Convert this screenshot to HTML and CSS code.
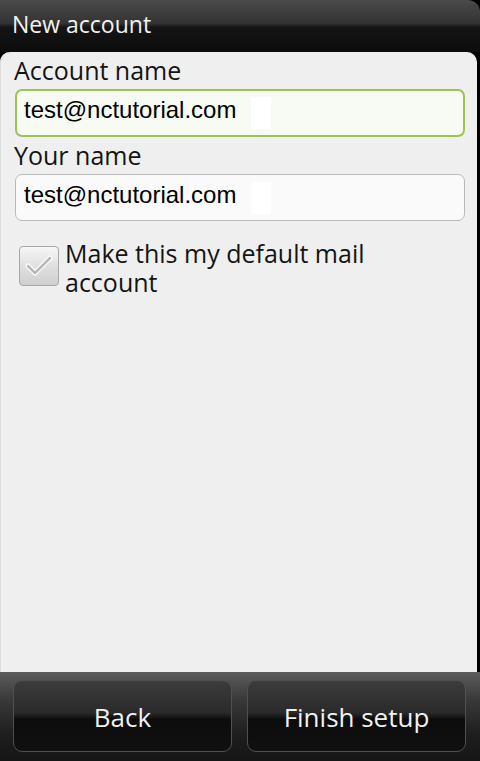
FILE: index.html
```html
<!DOCTYPE html>
<html>
<head>
<meta charset="utf-8">
<link rel="stylesheet" href="styles.css">
</head>
<body>
<div class="screen">
  <div class="titlebar"><span class="title">New account</span></div>
  <div class="panel">
    <div class="label">Account name</div>
    <div class="field field-focus"><span class="value">test@nctutorial.com</span><span class="cursorblock"></span></div>
    <div class="label label2">Your name</div>
    <div class="field"><span class="value">test@nctutorial.com</span><span class="cursorblock"></span></div>
    <div class="checkrow">
      <div class="checkbox">
        <svg width="40" height="40" viewBox="0 0 40 40">
          <path d="M9 20 L16 27 L31 12" fill="none" stroke="#ffffff" stroke-width="5" stroke-linejoin="round" stroke-linecap="round"/>
          <path d="M9 20 L16 27 L31 12" fill="none" stroke="#b8b8b8" stroke-width="2.5" stroke-linejoin="round" stroke-linecap="round"/>
        </svg>
      </div>
      <div class="checktext">Make this my default mail account</div>
    </div>
  </div>
  <div class="bottombar">
    <div class="btn">Back</div>
    <div class="btn">Finish setup</div>
  </div>
</div>
</body>
</html>
```
FILE: styles.css
```css
html, body {
  margin: 0;
  padding: 0;
  background: #000;
}
.screen {
  width: 480px;
  height: 761px;
  display: flex;
  flex-direction: column;
  overflow: hidden;
  background: #000;
}
.titlebar {
  height: 52px;
  flex: none;
  background: linear-gradient(#4a4a4a 0%, #333 45%, #151515 52%, #0c0c0c 100%);
  border-top-right-radius: 12px;
  display: flex;
  align-items: center;
  padding-left: 12px;
  padding-bottom: 4px;
  box-sizing: border-box;
}
.title {
  font-family: "Open Sans", "DejaVu Sans", sans-serif;
  font-size: 23px;
  color: #f2f2f2;
  line-height: 28px;
}
.panel {
  flex: 1;
  background: #efefef;
  border-radius: 10px 10px 0 0;
  margin-right: 3px;
  padding: 4px 14px 0 14px;
  box-shadow: inset 1px 0 0 #dcdcdc;
  display: flex;
  flex-direction: column;
}
.label {
  font-family: "Open Sans", "DejaVu Sans", sans-serif;
  font-size: 25px;
  line-height: 28px;
  color: #141414;
}
.label2 {
  margin-top: 4px;
}
.field {
  margin-top: 5px;
  margin-left: 1px;
  margin-right: -2px;
  height: 47px;
  box-sizing: border-box;
  border: 1px solid #b9b9b9;
  border-radius: 7px;
  background: #fafafa;
  display: flex;
  align-items: center;
  padding-left: 8px;
}
.field-focus {
  height: 48px;
  border: 2px solid #9bc552;
  background: #f8fbf3;
  padding-left: 7px;
}
.value {
  font-family: "Liberation Sans", Arial, sans-serif;
  font-size: 24px;
  color: #000;
  line-height: 28px;
  margin-top: -6px;
}
.cursorblock {
  display: inline-block;
  width: 20px;
  height: 32px;
  background: #fff;
  margin-left: 15px;
}
.checkrow {
  margin-top: 18px;
  display: flex;
  align-items: flex-start;
}
.checkbox {
  width: 40px;
  height: 40px;
  box-sizing: border-box;
  margin-top: 7px;
  margin-left: 5px;
  border: 1px solid #a8a8a8;
  border-radius: 4px;
  background: linear-gradient(#f6f6f6, #e0e0e0 50%, #cfcfcf);
  flex: none;
  position: relative;
}
.checkbox svg {
  position: absolute;
  left: -1px;
  top: -1px;
}
.checktext {
  margin-left: 6px;
  font-family: "Open Sans", "DejaVu Sans", sans-serif;
  font-size: 25px;
  line-height: 29px;
  color: #141414;
  width: 330px;
}
.bottombar {
  height: 89px;
  flex: none;
  box-sizing: border-box;
  padding: 8px 14px 9px 13px;
  display: flex;
  gap: 15px;
  background: linear-gradient(#5c5c5c 0%, #3a3a3a 30%, #1e1e1e 70%, #151515 100%);
}
.btn {
  flex: 1;
  box-sizing: border-box;
  border: 1px solid #505050;
  border-radius: 9px;
  background: linear-gradient(#3c3c3c 0%, #2a2a2a 45%, #0c0c0c 55%, #101010 100%);
  display: flex;
  align-items: center;
  justify-content: center;
  font-family: "Open Sans", "DejaVu Sans", sans-serif;
  font-size: 26px;
  color: #f0f0f0;
  padding-top: 2px;
}
```
